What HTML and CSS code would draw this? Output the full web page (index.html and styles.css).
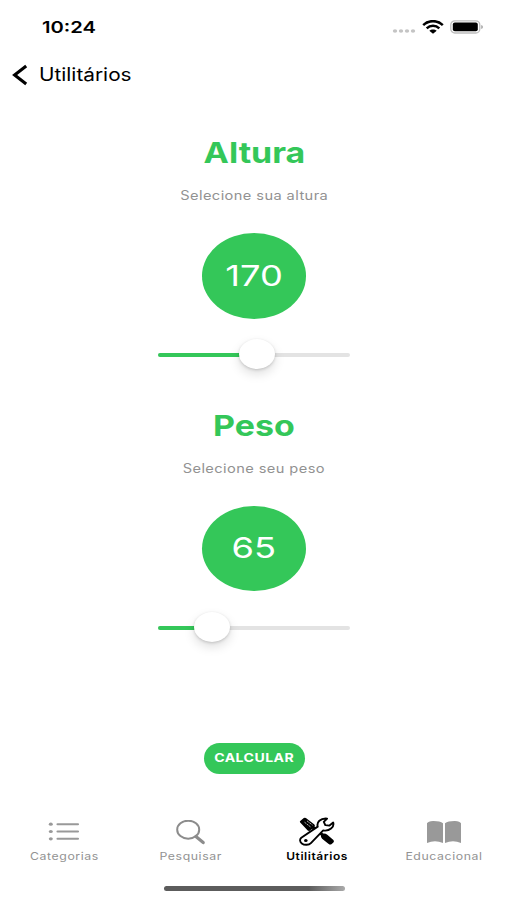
FILE: index.html
```html
<!DOCTYPE html>
<html lang="pt-BR">
<head>
<meta charset="utf-8">
<title>Utilitários</title>
<link rel="stylesheet" href="styles.css">
</head>
<body>
<div class="screen">
  <header class="status">
    <span class="time wide">10:24</span>
    <div class="indicators">
      <svg class="dots" width="24" height="6" viewBox="0 0 24 6"><g fill="#c4c4c4"><ellipse cx="3" cy="3" rx="2.2" ry="1.8"/><ellipse cx="9" cy="3" rx="2.2" ry="1.8"/><ellipse cx="15" cy="3" rx="2.2" ry="1.8"/><ellipse cx="21" cy="3" rx="2.2" ry="1.8"/></g></svg>
      <svg class="wifi" width="22" height="14" viewBox="0 0 22 14"><g fill="none" stroke="#000" stroke-width="2.5"><path d="M1.2 5.1C6.6-.2 15.4-.2 20.8 5.1"/><path d="M4.7 8.3C8.2 5 13.8 5 17.3 8.3"/></g><path d="M7.3 10.8C9.3 9 12.7 9 14.7 10.8L11 13.8Z"/></svg>
      <svg class="battery" width="34" height="14" viewBox="0 0 34 14"><rect x=".8" y=".8" width="29" height="12.2" rx="4" fill="#fff" stroke="#bdbdbd" stroke-width="1.3"/><rect x="2.8" y="2.5" width="25" height="8.8" rx="2"/><path d="M31.2 4.9Q33 5.4 33 7T31.2 9.1Z" fill="#aaa"/></svg>
    </div>
  </header>
  <nav class="back">
    <svg width="16" height="22" viewBox="0 0 16 22"><path d="M14.2 2L2.6 11L14.2 20" fill="none" stroke="#000" stroke-width="3.1"/></svg>
    <span class="back-label wide">Utilitários</span>
  </nav>
  <main>
    <section class="picker">
      <h1 class="title wide">Altura</h1>
      <p class="hint wide">Selecione sua altura</p>
      <div class="value"><span class="wide">170</span></div>
      <div class="slider"><div class="fill" style="width:99px"></div><div class="thumb" style="left:81px"></div></div>
    </section>
    <section class="picker">
      <h1 class="title wide">Peso</h1>
      <p class="hint wide">Selecione seu peso</p>
      <div class="value"><span class="wide">65</span></div>
      <div class="slider"><div class="fill" style="width:54px"></div><div class="thumb" style="left:36px"></div></div>
    </section>
    <button class="submit"><span class="wide">CALCULAR</span></button>
  </main>
  <footer class="tabs">
    <a class="tab">
      <svg width="32" height="26" viewBox="0 0 32 26"><g fill="#999"><ellipse cx="2.8" cy="4.2" rx="2" ry="1.6"/><ellipse cx="2.8" cy="11.5" rx="2" ry="1.6"/><ellipse cx="2.8" cy="18.8" rx="2" ry="1.6"/></g><path d="M9.5 4.2H30M9.5 11.5H30M9.5 18.8H30" stroke="#999" stroke-width="2.1" stroke-linecap="round"/></svg>
      <span class="wide">Categorias</span>
    </a>
    <a class="tab">
      <svg width="32" height="26" viewBox="0 0 32 26"><g fill="none" stroke="#8c8c8c"><ellipse cx="13.2" cy="9.7" rx="11" ry="9" stroke-width="2"/><path d="M20.9 16.5L28.2 22.6" stroke-width="3.2" stroke-linecap="round"/></g></svg>
      <span class="wide">Pesquisar</span>
    </a>
    <a class="tab active">
      <svg class="tools" width="36" height="30" viewBox="0 0 36 30"><path d="M1.2 5.5Q.4 4.8 1.2 4L4.8 1.1Q5.8.5 6.9 1.1L15.4 7.5Q16.4 8.7 15.6 9.7L24.2 16.6Q26.5 16.3 28.3 17.8L34.4 23Q35.6 24.4 34.4 25.6L32.4 27.2Q31 28 29.7 27L23.1 21.7Q21.6 20.1 21.9 18.5L13.2 11.7L10.7 13.7Q9.7 14.2 8.7 13.4Z"/><path d="M5.5 5.2L11.5 9.9M8 3.9L13.5 8.1" stroke="#fff" stroke-width=".7" stroke-dasharray="2.2 .7"/><path d="M2.3 20.7L18.7 9.6C17.5 5.4 21.2 1 28.1 1.6L24.8 4.9L26.3 8.1L30.5 8.6L34.2 5.6C35.5 10.1 30.5 14.5 24.2 13.4L11.9 26.1C9.9 28.1 5.5 28.5 2.8 26.4C.7 24.7.5 22.3 2.3 20.7Z" fill="#fff" stroke="#000" stroke-width="1.9" stroke-linejoin="round"/><ellipse cx="6.8" cy="23.4" rx="1.8" ry="1.5"/></svg>
      <span class="wide">Utilitários</span>
    </a>
    <a class="tab">
      <svg class="book" width="36" height="26" viewBox="0 0 36 26"><path d="M1 3.2Q2 1.2 7 .9Q14 .8 17 3.2V23Q9 19.5 1 23ZM19 3.2Q22 .8 29 .9Q34 1.2 35 3.2V23Q27 19.5 19 23Z" fill="#999"/></svg>
      <span class="wide">Educacional</span>
    </a>
  </footer>
  <div class="home"></div>
</div>
</body>
</html>
```

FILE: styles.css
```css
* { box-sizing: border-box; }
body { margin: 0; background: #fff; font-family: Inter, "Liberation Sans", sans-serif; color: #000; }
.screen { width: 507px; height: 900px; overflow: hidden; display: flex; flex-direction: column; background: #fff; }
.wide { display: inline-block; white-space: nowrap; transform: scaleX(1.17); }
.status { height: 54px; flex: none; display: flex; justify-content: space-between; padding: 17px 23px 0 42px; }
.time { font-size: 16px; line-height: 21px; font-weight: 600; transform: scaleX(1.26); transform-origin: left; }
.indicators { display: flex; align-items: flex-start; }
.dots { margin: 11px 6px 0 0; }
.wifi { margin: 3px 6px 0 0; }
.battery { margin-top: 3px; }
.back { height: 42px; flex: none; display: flex; align-items: center; gap: 11px; padding-left: 12px; }
.back-label { font-size: 18px; line-height: 24px; transform: scaleX(1.155); transform-origin: left; }
main { height: 711px; flex: none; display: flex; flex-direction: column; align-items: center; padding: 37px 0 0 1px; }
.picker { width: 192px; height: 272.7px; flex: none; display: flex; flex-direction: column; align-items: center; }
.title { margin: 0; font-size: 29px; line-height: 40px; font-weight: 700; color: #34c759; }
.hint { margin: 13px 0 0; font-size: 12.5px; line-height: 20px; color: #929292; letter-spacing: .35px; }
.value { margin-top: 27px; width: 104px; height: 85.5px; flex: none; border-radius: 50%; background: #34c759; color: #fff; display: flex; align-items: center; justify-content: center; font-size: 29px; line-height: 36px; }
.value .wide { transform: scaleX(1.25); }
.slider { position: relative; width: 192px; height: 4px; flex: none; margin-top: 34.5px; border-radius: 2px; background: #e3e3e3; }
.fill { height: 4px; border-radius: 2px; background: #34c759; }
.thumb { position: absolute; top: -14px; width: 36px; height: 30px; border-radius: 50%; background: #fff; box-shadow: 0 5px 11px rgba(0,0,0,.13), 0 1px 3px rgba(0,0,0,.17); }
.submit { margin-top: 64.6px; width: 101px; height: 31px; flex: none; border: 0; border-radius: 16px; padding: 0; background: #34c759; color: #fff; font: 700 12px/16px Inter, "Liberation Sans", sans-serif; letter-spacing: .4px; }
.tabs { flex: none; display: grid; grid-template-columns: repeat(4, 1fr); height: 79px; padding: 13px 0 0 1px; }
.tab { display: flex; flex-direction: column; align-items: center; color: #929292; font-size: 10.5px; line-height: 14px; letter-spacing: .5px; }
.tab span { margin-top: 4px; }
.active { color: #000; font-weight: 600; }
.active span { transform: scaleX(1.14); }
.tools { margin: -3px 0 -1px; }
.home { width: 181px; height: 5px; flex: none; margin-left: 164px; border-radius: 3px; background: linear-gradient(90deg, #5c5c5c 80%, #aaa); }
```
